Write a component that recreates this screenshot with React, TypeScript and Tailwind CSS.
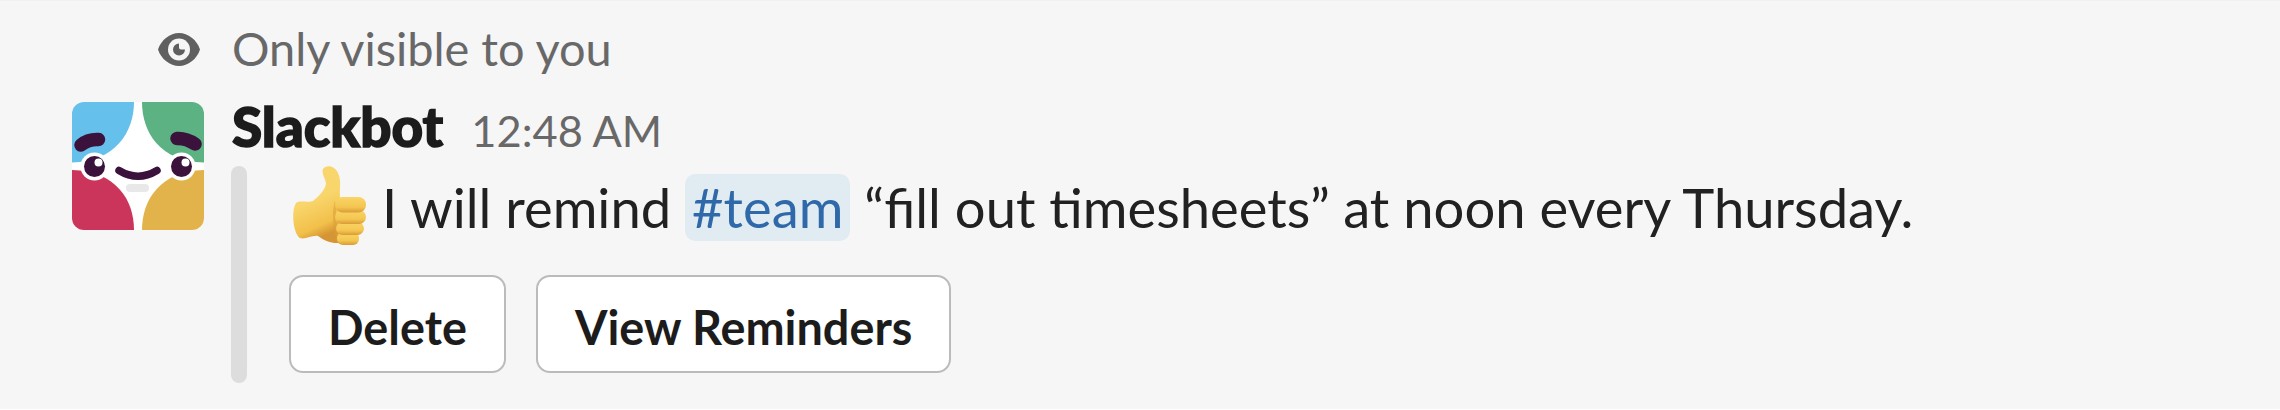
const actions = ["Delete", "View Reminders"];

const EyeIcon = () => (
	<svg className="w-[42px] h-[33px]" viewBox="0 0 42 33">
		<path
			d="M0 16.5C3 7 12 0 21 0s18 7 21 16.5C39 26 30 33 21 33S3 26 0 16.5Z"
			fill="#616061"
		/>
		<circle cx="21" cy="16.5" r="11" fill="#f6f6f6" />
		<path d="M21 10.5a6 6 0 1 0 6 6h-4a2 2 0 0 1-2-2Z" fill="#616061" />
	</svg>
);

const SlackbotAvatar = () => (
	<svg className="w-[132px] h-32 rounded-xl" viewBox="0 0 132 128">
		<rect width="132" height="128" fill="#fff" />
		<path d="M0 0H62C62 30 43 60 0 60.5Z" fill="#65c0ec" />
		<path d="M70 0h62v60.5C88 60 70 30 70 0Z" fill="#5cb282" />
		<path d="M0 68C44 69 62 98 62 128H0Z" fill="#cc355b" />
		<path d="M132 68C88 69 70 98 70 128h62Z" fill="#e3b34b" />
		<circle cx="22.5" cy="64.5" r="14" fill="#fff" />
		<circle cx="109.5" cy="64.5" r="14" fill="#fff" />
		<circle cx="22.5" cy="64.5" r="10.5" fill="#3a123c" />
		<circle cx="109.5" cy="64.5" r="10.5" fill="#3a123c" />
		<circle cx="26.5" cy="60.5" r="4" fill="#fff" />
		<circle cx="113.5" cy="60.5" r="4" fill="#fff" />
		<g fill="none" stroke="#3a123c" strokeLinecap="round">
			<path d="M9 43Q16 37 26.5 37.5" strokeWidth="13.5" />
			<path d="M105 36.5Q114 36 123 42" strokeWidth="13.5" />
			<path d="M47 68.5Q66 80 85 68.5" strokeWidth="7.5" />
		</g>
		<rect x="54" y="82" width="23" height="8" rx="4" fill="#e8e8e8" />
	</svg>
);

const ThumbsUp = () => (
	<svg className="w-[75px] h-20 shrink-0" viewBox="0 0 75 80">
		<defs>
			<linearGradient id="skin" x1="0" y1="0" x2="0.3" y2="1">
				<stop offset="0.5" stopColor="#f9d66c" />
				<stop offset="0.85" stopColor="#f2c04b" />
				<stop offset="1" stopColor="#d59535" />
			</linearGradient>
			<linearGradient id="finger" x1="0" y1="0" x2="0" y2="1">
				<stop offset="0" stopColor="#f9d467" />
				<stop offset="0.65" stopColor="#f4c650" />
				<stop offset="1" stopColor="#d99c35" />
			</linearGradient>
		</defs>
		<path
			d="M4 37C7 34 16 37 21 35C26 31 33 24 34 18C34 13 29 8 31 3C34-1 42-1 46 7C50 16 47 23 48 32L52 75C46 79 35 77 26 70C20 69 13 74 8 72C1 68-1 44 4 37Z"
			fill="url(#skin)"
		/>
		<path d="M44 36Q40 53 46 73" stroke="#dca038" strokeWidth="3" fill="none" opacity="0.6" />
		<rect x="45" y="66" width="22" height="13" rx="6" fill="url(#finger)" />
		<rect x="44" y="56" width="28" height="13" rx="6.5" fill="url(#finger)" />
		<rect x="43" y="44" width="31" height="14" rx="7" fill="url(#finger)" />
		<rect x="43" y="31" width="31" height="15.5" rx="7.5" fill="url(#finger)" />
	</svg>
);

const App = () => {
	return (
		<main className="h-[410px] bg-[#f6f6f6] border-t border-t-[#f2f2f2] border-b border-b-white pl-[72px] pt-[18px] font-['Lato',sans-serif] text-[#1d1c1d] whitespace-nowrap">
			<div className="flex items-center text-[46.9px] leading-[56px] text-[#696869]">
				<div className="w-[159px] flex justify-end pr-[31px] pt-1">
					<EyeIcon />
				</div>
				<span className="pl-px pt-px">Only visible to you</span>
			</div>
			<div className="flex mt-[19px]">
				<div className="w-[159px] pt-[7px]">
					<SlackbotAvatar />
				</div>
				<div>
					<div className="flex items-baseline gap-[28px] h-[60px] leading-[60px] pt-px">
						<span className="text-[54.8px] font-black pl-px [-webkit-text-stroke:1.5px_#1d1c1d]">
							Slackbot
						</span>
						<span className="text-[43.4px] text-[#696869]">12:48 AM</span>
					</div>
					<div className="flex mt-[11px]">
						<div className="w-4 rounded-full bg-[#dddddd]" />
						<div className="pl-[42px] pb-2.5">
							<div className="flex h-[74px]">
								<div className="pl-[3px]">
									<ThumbsUp />
								</div>
								<p className="pt-2 pl-[15px] text-[54.35px] leading-[66px] text-[#222122]">
									I will remind{" "}
									<a className="bg-[#e1ecf2] text-[#2f69a9] rounded-[10px] px-[7px] pb-px">#team</a>{" "}
									“fill out timesheets” at noon every Thursday.
								</p>
							</div>
							<div className="flex gap-[30px] mt-[35px]">
								{actions.map((action) => (
									<button
										key={action}
										className="h-[98px] px-[37px] pt-1.5 bg-white border-2 border-[#bbbbbb] rounded-[14px] text-[46.8px] font-bold"
									>
										{action}
									</button>
								))}
							</div>
						</div>
					</div>
				</div>
			</div>
		</main>
	);
};

export default App;
